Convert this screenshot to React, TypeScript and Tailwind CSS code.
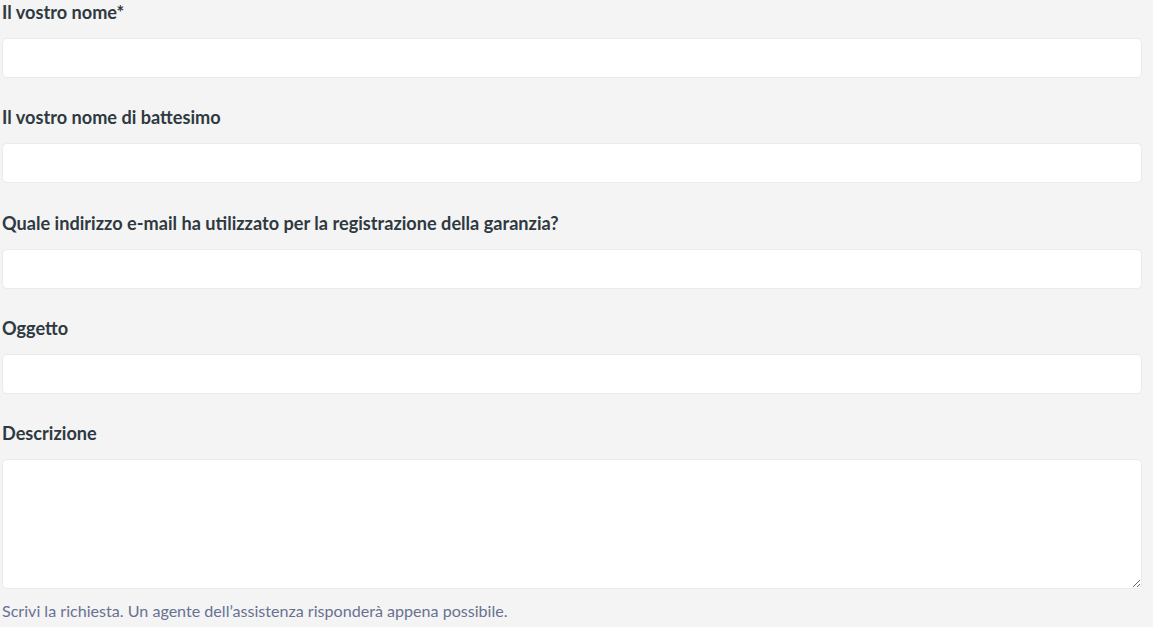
import React from "react";

const fields = [
  "Il vostro nome*",
  "Il vostro nome di battesimo",
  "Quale indirizzo e-mail ha utilizzato per la registrazione della garanzia?",
  "Oggetto",
];

export default function App() {
  return (
    <div
      className="min-h-[627px] w-full bg-[#f4f4f4] pl-[2px]"
      style={{ fontFamily: "Lato, 'Noto Sans', sans-serif" }}
    >
      <div className="w-[1140px] flex flex-col">
        {fields.map((f) => (
          <div key={f} className="flex flex-col mb-[27.25px]">
            <label className="text-[18.15px] leading-[24px] font-bold text-[#2f3941] mb-[14px]">
              {f}
            </label>
            <input
              type="text"
              className="h-[40px] w-full bg-white border border-[#ebebeb] rounded-[5px] outline-none"
            />
          </div>
        ))}
        <div className="flex flex-col">
          <label className="text-[18.15px] leading-[24px] font-bold text-[#2f3941] mb-[14px]">
            Descrizione
          </label>
          <textarea className="h-[130px] w-full bg-white border border-[#ebebeb] rounded-[5px] outline-none block" />
          <p className="text-[16.1px] leading-[20px] text-[#687191] mt-[12px]">
            Scrivi la richiesta. Un agente dell’assistenza risponderà appena possibile.
          </p>
        </div>
      </div>
    </div>
  );
}
